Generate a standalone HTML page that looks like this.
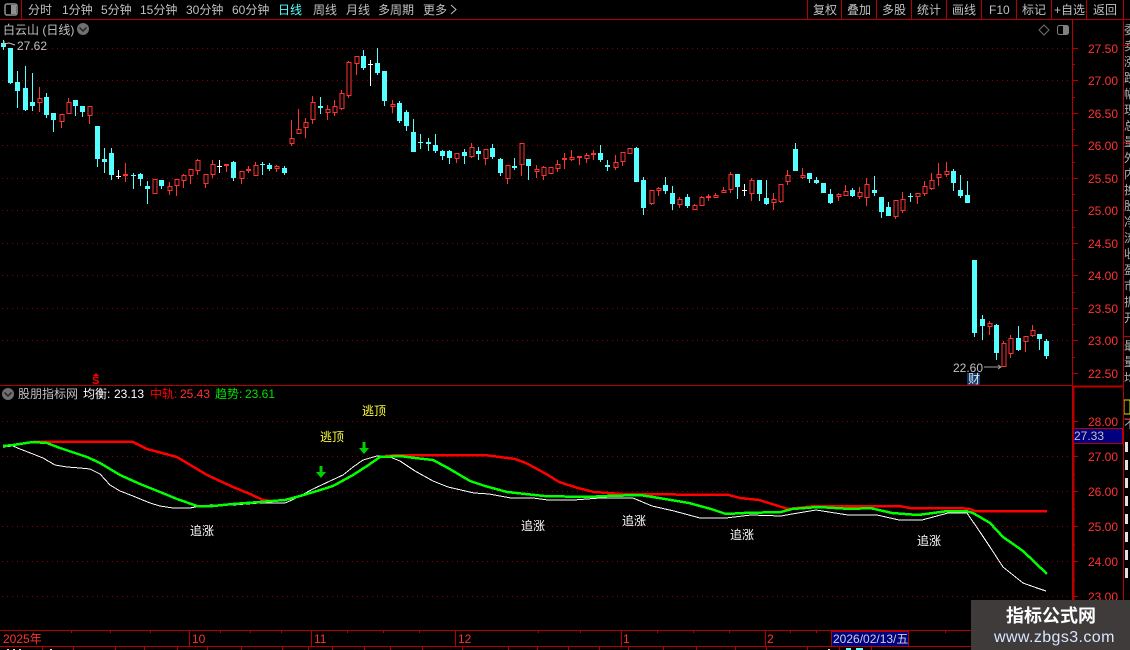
<!DOCTYPE html>
<html lang="zh">
<head>
<meta charset="utf-8">
<title>白云山 日线</title>
<style>
html,body{margin:0;padding:0;background:#000;width:1130px;height:650px;overflow:hidden}
svg{display:block;position:absolute;left:0;top:0}
text{font-family:"WenQuanYi Zen Hei","Liberation Sans","Noto Sans CJK SC",sans-serif;font-size:12px}
.n{font-family:"Liberation Sans",sans-serif;font-size:12px}
.t{fill:#c0c0c0}
.ax{fill:#ff3232;font-family:"Liberation Sans",sans-serif;font-size:12px}
</style>
</head>
<body>
<svg width="1130" height="650" viewBox="0 0 1130 650" xmlns="http://www.w3.org/2000/svg">
<!-- grid -->
<g fill="none" stroke="#900000" stroke-dasharray="1 4" shape-rendering="crispEdges">
<path d="M2 48.5H1072M2 80.5H1072M2 113.5H1072M2 145.5H1072M2 178.5H1072M2 210.5H1072M2 243.5H1072M2 275.5H1072M2 308.5H1072M2 340.5H1072"/>
<path d="M2 421.5H1072M2 456.5H1072M2 491.5H1072M2 526.5H1072M2 561.5H1072M2 596.5H1072"/>
</g>
<!-- frame -->
<g fill="none" stroke="#b80000" shape-rendering="crispEdges">
<path d="M0 19.5H1130M21.5 0V19M807.5 0V19M841.5 0V19M876.5 0V19M911.5 0V19M946.5 0V19M981.5 0V19M1016.5 0V19M1051.5 0V19M1086.5 0V19M1123.5 0V650"/>
<path d="M1072.5 20V630M0 385.5H1072"/>
<path d="M1073 386.5H1123" stroke-width="2"/>
<path d="M1073.5 386V630" stroke-width="2"/>
<path d="M0 630.5H1130M0 646.5H1130"/>
<path d="M1072 48.5h6M1072 80.5h6M1072 113.5h6M1072 145.5h6M1072 178.5h6M1072 210.5h6M1072 243.5h6M1072 275.5h6M1072 308.5h6M1072 340.5h6M1072 373.5h6M1072 64.5h3M1072 97.5h3M1072 129.5h3M1072 162.5h3M1072 194.5h3M1072 227.5h3M1072 259.5h3M1072 292.5h3M1072 324.5h3M1072 357.5h3"/>
<path d="M1072 421.5h6M1072 456.5h6M1072 491.5h6M1072 526.5h6M1072 561.5h6M1072 596.5h6M1072 474.5h3M1072 509.5h3M1072 544.5h3M1072 579.5h3"/>
<path d="M189.5 631V646M311.5 631V646M455.5 631V646M621.5 631V646M765.5 631V646"/>
<path d="M71.5 631v2M110.5 631v2M150.5 631v2M220.5 631v2M250.5 631v2M281.5 631v2M347.5 631v2M383.5 631v2M419.5 631v2M538.5 631v2M580.5 631v2M657.5 631v2M693.5 631v2M729.5 631v2M790.5 631v2M816.5 631v2M945.5 631v2"/>
<path d="M42.5 647v3M73.5 647v3M115.5 647v3M144.5 647v3M177.5 647v3M207.5 647v3M241.5 647v3M282.5 647v3M308.5 647v3M332.5 647v3M364.5 647v3M390.5 647v3M422.5 647v3M462.5 647v3M508.5 647v3M537.5 647v3M568.5 647v3M599.5 647v3M628.5 647v3M663.5 647v3M696.5 647v3M735.5 647v3M766.5 647v3M807.5 647v3M839.5 647v3M871.5 647v3"/>
</g>
<!-- candles -->
<g shape-rendering="crispEdges" fill="none">
<path stroke="#55ffff" d="M3.5 40V50M10.5 48V84M17.5 71V108M25.5 66V111M32.5 73V111M46.5 93V118M53.5 113V132M75.5 100V116M82.5 106V117M97.5 126V167M104.5 148V173M111.5 148V180M133.5 173V189M140.5 173V186M147.5 181V204M161.5 180V189M233.5 161V181M262.5 162V175M269.5 163V171M284.5 166V175M320.5 97V114M363.5 50V70M377.5 48V75M384.5 71V106M399.5 101V123M406.5 110V131M413.5 119V152M420.5 134V149M428.5 138V151M435.5 134V153M442.5 150V160M449.5 150V164M464.5 149V164M478.5 147V160M492.5 144V159M500.5 158V176M514.5 158V170M528.5 159V180M600.5 145V162M607.5 160V171M636.5 147V182M643.5 177V215M665.5 177V194M672.5 186V210M687.5 194V208M737.5 174V199M759.5 180V201M766.5 180V205M795.5 143V171M809.5 173V183M816.5 177V184M830.5 189V204M852.5 188V197M874.5 176V196M881.5 197V218M888.5 202V216M910.5 193V202M953.5 169V191M960.5 175V198M967.5 181V203M974.5 260V337M982.5 315V340M996.5 324V360M1018.5 326V351M1039.5 334V350M1046.5 339V359"/>
<path stroke="#55ffff" stroke-width="5" d="M3.5 43V47M10.5 48V83M17.5 82V91M25.5 88V110M32.5 102V106M46.5 97V115M53.5 113V120M75.5 100V106M82.5 106V112M97.5 126V159M104.5 159V162M111.5 153V175M140.5 174V179M147.5 186V189M161.5 180V186M233.5 162V178M269.5 165V169M284.5 168V173M363.5 56V68M377.5 63V73M384.5 71V101M399.5 103V121M406.5 112V126M413.5 132V152M428.5 142V144M435.5 145V151M442.5 151V156M449.5 151V158M464.5 152V156M478.5 151V154M492.5 148V157M500.5 159V173M514.5 166V168M528.5 159V166M600.5 153V160M636.5 148V182M643.5 180V208M665.5 185V191M672.5 193V204M687.5 197V206M737.5 174V187M759.5 180V194M766.5 198V204M795.5 149V171M809.5 173V179M816.5 180V183M823.5 183V193M830.5 194V203M852.5 190V196M874.5 190V193M881.5 197V212M888.5 207V216M953.5 171V183M960.5 190V196M967.5 195V203M974.5 260V333M982.5 319V326M996.5 325V353M1018.5 338V350M1039.5 334V339M1046.5 341V356M320.5 106V108M607.5 165V167"/>
<path stroke="#55ffff" d="M131 175.5h5M260 164.5h5M418 142.5h5M908 196.5h5"/>
<path stroke="#ff3232" d="M39.5 87V112M61.5 114V128M68.5 98V114M89.5 106V124M125.5 163V182M169.5 182V195M176.5 179V196M183.5 174V188M190.5 169V184M197.5 159V175M205.5 174V188M212.5 160V178M226.5 164V172M241.5 171V184M248.5 166V173M255.5 162V176M276.5 165V172M291.5 120V146M298.5 109V134M305.5 118V138M312.5 96V124M327.5 105V120M334.5 100V116M341.5 90V110M348.5 61V98M356.5 56V75M392.5 100V113M456.5 153V163M471.5 143V158M485.5 149V165M507.5 165V184M521.5 143V176M536.5 165V178M543.5 166V180M557.5 160V172M564.5 153V169M571.5 150V161M579.5 156V165M586.5 153V163M593.5 150V160M615.5 155V170M622.5 152V166M651.5 190V205M658.5 187V196M679.5 197V208M694.5 204V210M701.5 196V206M708.5 194V201M715.5 193V198M723.5 187V193M730.5 172V193M751.5 178V201M773.5 193V210M780.5 184V203M787.5 170V185M802.5 168V179M838.5 193V201M845.5 185V196M859.5 187V199M866.5 178V206M895.5 200V219M902.5 192V213M917.5 193V204M924.5 181V196M931.5 173V190M938.5 163V186M946.5 162V177M989.5 321V335M1003.5 341V367M1010.5 335V358M1025.5 336V352M1032.5 325V337"/>
<path stroke="#ff3232" fill="#000" d="M38 98.5h4V102.5h-4zM60 114.5h4V121.5h-4zM67 102.5h4V113.5h-4zM88 106.5h4V115.5h-4zM153 179.500h4V193.500h-4zM168 186.500h4V190.500h-4zM175 179.500h4V185.500h-4zM182 175.500h4V180.500h-4zM189 169.500h4V175.500h-4zM196 160.500h4V170.500h-4zM204 174.500h4V183.500h-4zM211 164.500h4V174.500h-4zM240 171.500h4V178.500h-4zM254 165.500h4V175.500h-4zM275 166.500h4V168.500h-4zM290 138.500h4V143.500h-4zM297 129.500h4V133.500h-4zM304 122.500h4V127.500h-4zM311 102.500h4V119.500h-4zM326 109.500h4V112.500h-4zM333 106.500h4V112.500h-4zM340 93.500h4V108.500h-4zM347 62.500h4V95.500h-4zM355 56.500h4V63.500h-4zM391 104.500h4V106.500h-4zM455 153.500h4V158.500h-4zM470 147.500h4V156.500h-4zM484 149.500h4V158.500h-4zM506 165.500h4V178.500h-4zM520 143.500h4V164.500h-4zM535 169.500h4V171.500h-4zM542 167.500h4V175.500h-4zM549 167.500h4V173.500h-4zM556 164.500h4V168.500h-4zM570 157.500h4V159.500h-4zM585 155.500h4V158.500h-4zM614 162.500h4V167.500h-4zM621 152.500h4V161.500h-4zM628 148.500h4V153.500h-4zM650 190.500h4V203.500h-4zM657 188.500h4V190.500h-4zM678 199.500h4V204.500h-4zM693 205.500h4V209.500h-4zM700 197.500h4V205.500h-4zM714 195.500h4V197.500h-4zM722 190.500h4V192.500h-4zM729 174.500h4V189.500h-4zM750 180.500h4V193.500h-4zM772 199.500h4V202.500h-4zM779 184.500h4V201.500h-4zM786 175.500h4V181.500h-4zM801 175.500h4V177.500h-4zM837 194.500h4V196.500h-4zM844 191.500h4V195.500h-4zM858 192.500h4V196.500h-4zM865 184.500h4V197.500h-4zM894 200.500h4V216.500h-4zM901 199.500h4V210.500h-4zM916 193.500h4V196.500h-4zM923 186.500h4V193.500h-4zM930 180.500h4V188.500h-4zM937 174.500h4V177.500h-4zM945 171.500h4V174.500h-4zM988 323.500h4V326.500h-4zM1002 343.500h4V366.500h-4zM1009 338.500h4V353.500h-4zM1024 336.500h4V341.500h-4zM1031 330.500h4V335.500h-4z"/>
<path stroke="#ff3232" stroke-width="2" d="M123 175h5M246 170h5M224 165h5M562 159h5M577 157h5M591 154h5M706 197h5"/>
<path stroke="#fff" d="M118.500 170V179M116 176.500h5M219.500 160V173M217 166.500h5M370.500 60V86M368 64.500h5M744.500 184V196M742 190.500h5"/>
</g>
<!-- indicator lines -->
<g fill="none" stroke-linejoin="round" shape-rendering="crispEdges">
<polyline stroke="#fff" stroke-width="1" points="3,447 13,446 20,449 33,454 43,458 55,465 67,467 80,468 90,469 100,474 110,485 120,491 133,496 150,503 160,506 173,508 190,508 200,506 213,505 233,505 260,503 285,503 292,500 300,496 313,489 330,481 343,475 353,467 363,460 377,456 390,457 400,461 415,471 433,481 448,487 474,493 489,494 511,498 533,498 548,500 574,500 600,498 633,498 652,506 674,511 700,518 726,518 751,515 781,516 792,514 816,510 848,515 877,515 899,520 922,520 948,513 967,513 980,532 990,547 1003,567 1023,583 1037,588 1046,591"/>
<polyline stroke="#ff0000" stroke-width="2.500" points="33,441.500 118,441.500 133,442 147,449 177,457 207,475 233,487 250,494 263,500 272,501"/>
<polyline stroke="#ff0000" stroke-width="2.500" points="385,456 400,455 485,455 492,456 515,459 526,463 548,475 559,482 578,488 594,492 622,494 729,495 740,498 759,500 788,509 816,506 899,506 910,508 959,508 970,509 975,511 1047,511"/>
<polyline stroke="#00ff00" stroke-width="2.500" points="3,446 13,445 33,442 47,443 60,448 87,457 100,463 120,475 140,484 160,492 177,499 197,506 213,506 233,504 260,502 285,500 300,496 317,491 333,486 353,475 367,466 380,457 400,456 415,458 433,460 448,468 470,481 485,486 507,492 544,496 585,497 607,496 640,495 659,498 689,503 711,509 726,514 744,513 781,512 792,509 818,507 851,509 870,508 892,513 918,515 948,511 966,511 973,513 990,523 1003,537 1023,551 1047,574"/>
</g>
<!-- arrows -->
<path fill="#00d000" d="M319.500 466h3v6h3.500l-5 6-5-6h3.500zM362.500 442h3v6h3.500l-5 6-5-6h3.500z"/>
<!-- S marker -->
<path fill="#ff0000" d="M96 373l3 3h-6z"/>
<text x="92" y="384" fill="#ff0000" style="font-family:'Liberation Sans',sans-serif;font-size:11px;font-weight:bold">S</text>
<!-- toolbar -->
<g class="t">
<rect x="5" y="4" width="12" height="11" rx="2" fill="none" stroke="#909090" stroke-width="1.500"/>
<rect x="11" y="5" width="5" height="9" fill="#909090"/>
<text x="28" y="14">分时</text>
<text x="62" y="14">1分钟</text>
<text x="101" y="14">5分钟</text>
<text x="140" y="14">15分钟</text>
<text x="186" y="14">30分钟</text>
<text x="232" y="14">60分钟</text>
<text x="278" y="14" style="fill:#55ffff">日线</text>
<text x="313" y="14">周线</text>
<text x="346" y="14">月线</text>
<text x="378" y="14">多周期</text>
<text x="423" y="14">更多</text>
<path d="M451 5l5 4.500-5 4.500" fill="none" stroke="#c0c0c0"/>
<text x="813" y="14">复权</text>
<text x="847" y="14">叠加</text>
<text x="882" y="14">多股</text>
<text x="917" y="14">统计</text>
<text x="952" y="14">画线</text>
<text x="989" y="14" class="n">F10</text>
<text x="1022" y="14">标记</text>
<text x="1054" y="14">+自选</text>
<text x="1093" y="14">返回</text>
<text x="3" y="34">白云山 (日线)</text>
</g>
<circle cx="83" cy="29" r="6" fill="#707070"/>
<path d="M79.500 27.500l3.500 3.500 3.500-3.500" fill="none" stroke="#222" stroke-width="1.500"/>
<path d="M1044 25l5 5-5 5-5-5z" fill="none" stroke="#707070"/>
<rect x="1057.500" y="25.500" width="11" height="9" rx="2" fill="none" stroke="#808080"/>
<rect x="1063" y="26" width="5" height="8" fill="#808080"/>
<!-- markers -->
<text x="17" y="50" class="n" fill="#c0c0c0">27.62</text>
<path d="M15 45l-6-2-5 1M4 41v4" fill="none" stroke="#c0c0c0"/>
<text x="953" y="372" class="n" fill="#c0c0c0">22.60</text>
<path d="M984 367h17M998 365l3 2-3 2" fill="none" stroke="#a0a0a0"/>
<rect x="967" y="373" width="13" height="12" fill="#0a3a6e"/>
<text x="968" y="383" fill="#e0e0e0">财</text>
<!-- axis labels -->
<g class="ax">
<text x="1088" y="53" class="ax">27.50</text>
<text x="1088" y="85" class="ax">27.00</text>
<text x="1088" y="118" class="ax">26.50</text>
<text x="1088" y="150" class="ax">26.00</text>
<text x="1088" y="183" class="ax">25.50</text>
<text x="1088" y="215" class="ax">25.00</text>
<text x="1088" y="248" class="ax">24.50</text>
<text x="1088" y="280" class="ax">24.00</text>
<text x="1088" y="313" class="ax">23.50</text>
<text x="1088" y="345" class="ax">23.00</text>
<text x="1088" y="378" class="ax">22.50</text>
<text x="1088" y="426" class="ax">28.00</text>
<text x="1088" y="461" class="ax">27.00</text>
<text x="1088" y="496" class="ax">26.00</text>
<text x="1088" y="531" class="ax">25.00</text>
<text x="1088" y="566" class="ax">24.00</text>
<text x="1088" y="601" class="ax">23.00</text>
</g>
<rect x="1073.500" y="428.500" width="49" height="15" fill="#000080" stroke="#b80000"/>
<text x="1074" y="440" class="n" fill="#c0c0c0">27.33</text>
<!-- indicator header -->
<circle cx="8" cy="394" r="6" fill="#707070"/>
<path d="M4.500 392.500l3.500 3.500 3.500-3.500" fill="none" stroke="#222" stroke-width="1.500"/>
<text x="18" y="398" fill="#c0c0c0">股朋指标网</text>
<text x="83" y="398" fill="#fff">均衡:</text><text x="114" y="398" class="n" fill="#fff">23.13</text>
<text x="150" y="398" fill="#ff0000">中轨:</text><text x="180" y="398" class="n" fill="#ff3232">25.43</text>
<text x="215" y="398" fill="#00e000">趋势:</text><text x="245" y="398" class="n" fill="#00e000">23.61</text>
<!-- signals -->
<text x="320" y="441" fill="#ffff40">逃顶</text>
<text x="362" y="415" fill="#ffff40">逃顶</text>
<text x="190" y="535" fill="#fff">追涨</text>
<text x="521" y="530" fill="#fff">追涨</text>
<text x="622" y="525" fill="#fff">追涨</text>
<text x="730" y="539" fill="#fff">追涨</text>
<text x="917" y="545" fill="#fff">追涨</text>
<!-- time axis -->
<g class="ax">
<text x="3" y="643" class="ax">2025年</text>
<text x="192" y="643" class="ax">10</text>
<text x="314" y="643" class="ax">11</text>
<text x="458" y="643" class="ax">12</text>
<text x="623" y="643" class="ax">1</text>
<text x="767" y="643" class="ax">2</text>
</g>
<rect x="831.500" y="631.500" width="77" height="15" fill="#000080" stroke="#b80000"/>
<text x="833" y="643" fill="#d0d0d0" class="n">2026/02/13/五</text>
<!-- bottom clipped status marks -->
<path d="M7 649h2v1h-2zM13 649h2v1h-2zM19 649h2v1h-2zM50 649h2v1h-2zM828 649h2v1h-2z" fill="#e0e0e0"/>
<path d="M846 648h5v2h-5zM856 648h7v2h-7z" fill="#55ffff"/>
<!-- right strip -->
<svg x="1124" y="20" width="6" height="630" viewBox="0 0 6 630">
<g fill="#b0b0b0">
<text x="0" y="14">委</text><text x="0" y="30">卖</text><text x="0" y="46">涨</text><text x="0" y="62">跌</text><text x="0" y="78">幅</text><text x="0" y="94">现</text><text x="0" y="110">总</text><text x="0" y="126">量</text><text x="0" y="142">外</text><text x="0" y="158">内</text><text x="0" y="174">换</text><text x="0" y="190">股</text><text x="0" y="206">净</text><text x="0" y="222">流</text><text x="0" y="238">收</text><text x="0" y="254">盈</text><text x="0" y="270">市</text><text x="0" y="286">振</text><text x="0" y="302">开</text><text x="0" y="330">最</text><text x="0" y="346">量</text><text x="0" y="362">均</text>
<text x="0" y="408">不</text>
</g>
<rect x="0" y="380" width="6" height="14" fill="none" stroke="#e0e000"/>
<path d="M0 316.500H6M0 25.500H6M0 122.500H6M0 398.500H6" stroke="#b80000" shape-rendering="crispEdges"/>
<g fill="#e0e0e0">
<rect x="1" y="422" width="3" height="10"/><rect x="1" y="440" width="3" height="10"/><rect x="1" y="458" width="3" height="10"/><rect x="1" y="476" width="3" height="10"/><rect x="1" y="494" width="3" height="10"/><rect x="1" y="512" width="3" height="10"/><rect x="1" y="530" width="3" height="10"/><rect x="1" y="548" width="3" height="10"/>
</g>
</svg>
<!-- watermark -->
<rect x="971" y="600" width="159" height="50" fill="#3f3b3b"/>
<text x="1006" y="622" fill="#fff" style="font-family:'Noto Sans CJK SC',sans-serif;font-size:18px;font-weight:bold">指标公式网</text>
<text x="994" y="642" fill="#d8e6ff" style="font-family:'Liberation Sans',sans-serif;font-size:16px;letter-spacing:.4px">www.zbgs3.com</text>
</svg>
</body>
</html>
